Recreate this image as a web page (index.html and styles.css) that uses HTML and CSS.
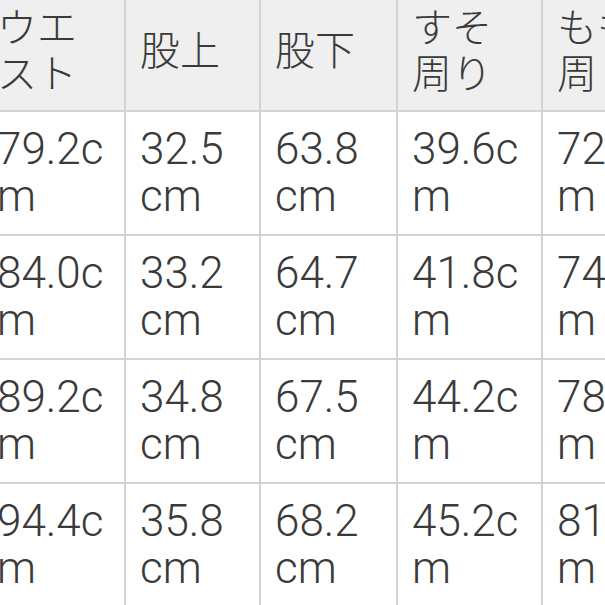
FILE: index.html
```html
<!DOCTYPE html>
<html lang="ja">
<head>
<meta charset="utf-8">
<link rel="stylesheet" href="styles.css">
</head>
<body>
<table class="size-table">
  <colgroup>
    <col class="c1"><col class="c2"><col class="c3"><col class="c4"><col class="c5">
  </colgroup>
  <thead>
    <tr>
      <th>ウエ<br>スト</th>
      <th>股上</th>
      <th>股下</th>
      <th>すそ<br>周り</th>
      <th>もも<br>周り</th>
    </tr>
  </thead>
  <tbody>
    <tr><td>79.2c<br>m</td><td>32.5<br>cm</td><td>63.8<br>cm</td><td>39.6c<br>m</td><td>72.0c<br>m</td></tr>
    <tr><td>84.0c<br>m</td><td>33.2<br>cm</td><td>64.7<br>cm</td><td>41.8c<br>m</td><td>74.4c<br>m</td></tr>
    <tr><td>89.2c<br>m</td><td>34.8<br>cm</td><td>67.5<br>cm</td><td>44.2c<br>m</td><td>78.0c<br>m</td></tr>
    <tr><td>94.4c<br>m</td><td>35.8<br>cm</td><td>68.2<br>cm</td><td>45.2c<br>m</td><td>81.6c<br>m</td></tr>
  </tbody>
</table>
</body>
</html>
```
FILE: styles.css
```css
html, body {
  margin: 0;
  padding: 0;
  background: #ffffff;
  overflow: hidden;
  width: 605px;
  height: 605px;
}
.size-table {
  border-collapse: collapse;
  table-layout: fixed;
  width: 710px;
  margin-left: -19px;
  margin-top: -4px;
  color: #3a3a3a;
  font-family: "Roboto", "Liberation Sans", "Noto Sans CJK JP", sans-serif;
}
.c1 { width: 143px; }
.c2 { width: 135px; }
.c3 { width: 137px; }
.c4 { width: 145px; }
.c5 { width: 150px; }
.size-table th,
.size-table td {
  border: 2px solid #d3d3d3;
  text-align: left;
  white-space: nowrap;
  overflow: hidden;
  vertical-align: middle;
}
.size-table th {
  background: #efefef;
  font-weight: 300;
  font-size: 40px;
  line-height: 46px;
  padding: 4px 12px 16px 14px;
  font-family: "Noto Sans CJK JP", sans-serif;
}
.size-table td {
  font-size: 44px;
  font-weight: 300;
  line-height: 47px;
  padding: 14px 12px 14px 14px;
  background: #ffffff;
}
```
